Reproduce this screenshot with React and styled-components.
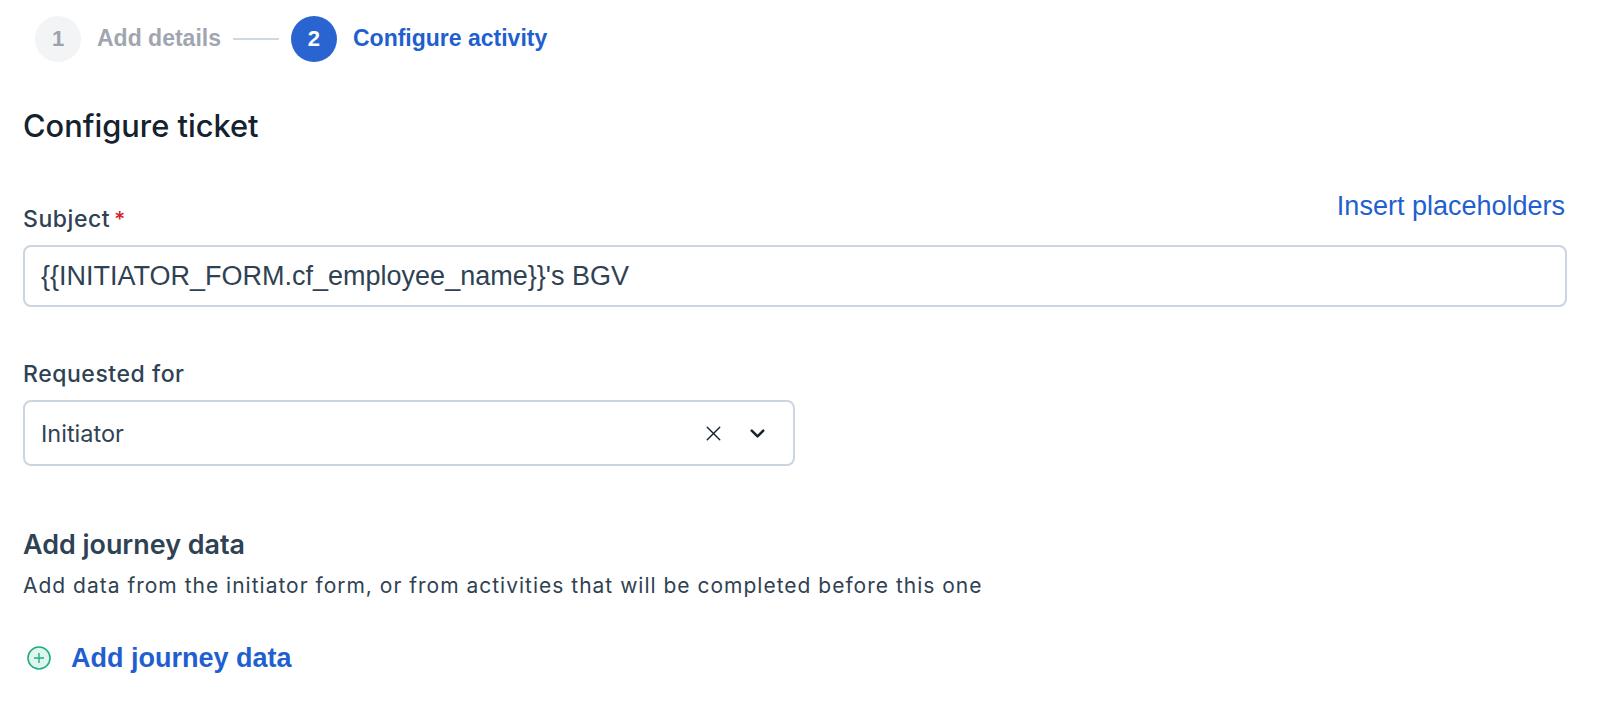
import React from 'react';
import styled, { createGlobalStyle } from 'styled-components';
import { X, ChevronDown } from 'lucide-react';

const GlobalStyle = createGlobalStyle`
  html, body {
    margin: 0;
    padding: 0;
    background: #fff;
    font-family: Inter, "Liberation Sans", sans-serif;
  }
`;

const Page = styled.div`
  width: 1600px;
  height: 701px;
  overflow: hidden;
  box-sizing: border-box;
  padding: 15px 33px 0 23px;
`;

const Stepper = styled.div`
  display: flex;
  align-items: center;
  padding-left: 12px;
  height: 47px;
`;

const StepCircle = styled.div`
  width: 46px;
  height: 46px;
  border-radius: 50%;
  display: flex;
  align-items: center;
  justify-content: center;
  font-family: "Liberation Sans", sans-serif;
  font-weight: 700;
  font-size: 22px;
  background: ${p => (p.$active ? '#2a64d0' : '#f3f4f6')};
  color: ${p => (p.$active ? '#fff' : '#9aa2ad')};
`;

const StepLabel = styled.span`
  margin-left: 16px;
  font-family: "Liberation Sans", sans-serif;
  font-weight: 700;
  font-size: 23px;
  color: ${p => (p.$active ? '#1f5fd0' : '#9fa6b0')};
`;

const StepLine = styled.div`
  width: 46px;
  height: 2px;
  margin: 0 12px;
  background: #cfd8e3;
`;

const Title = styled.h1`
  margin: 45px 0 0;
  font-size: 30.8px;
  line-height: 38px;
  font-weight: 500;
  color: #14212e;
`;

const LabelRow = styled.div`
  display: flex;
  justify-content: space-between;
  align-items: flex-end;
  height: 28px;
`;

const Label = styled.label`
  display: block;
  font-size: 23px;
  letter-spacing: 0.55px;
  line-height: 28px;
  font-weight: 500;
  color: #2f4254;
`;

const Required = styled.span`
  color: #d0202a;
  font-size: 21px;
  line-height: 1;
  margin-left: 4px;
`;

const PlaceholderLink = styled.a`
  font-family: "Liberation Sans", sans-serif;
  font-size: 27px;
  line-height: 30px;
  color: #1f5fd0;
  margin-right: 2px;
  margin-bottom: 12px;
`;

const SubjectField = styled.div`
  margin-top: 12px;
  height: 62px;
  box-sizing: border-box;
  border: 2px solid #cbd5e1;
  border-radius: 8px;
  padding: 0 16px;
  display: flex;
  align-items: center;
  font-family: "Liberation Sans", sans-serif;
  font-size: 27px;
  color: #2f4254;
`;

const SelectField = styled.div`
  margin-top: 12px;
  width: 772px;
  height: 66px;
  box-sizing: border-box;
  border: 2px solid #cbd5e1;
  border-radius: 8px;
  padding: 0 24px 0 16px;
  display: flex;
  align-items: center;
  font-size: 23.5px;
  color: #2f4254;
`;

const SelectValue = styled.span`
  flex: 1;
`;

const SelectIcons = styled.div`
  display: flex;
  align-items: center;
  gap: 20px;
  color: #18222e;
`;

const Section = styled.div`
  margin-top: ${p => p.$top}px;
`;

const SubHeading = styled.h2`
  margin: 0;
  font-size: 26.9px;
  line-height: 32px;
  font-weight: 600;
  color: #2f4254;
`;

const Description = styled.p`
  margin: 13px 0 0;
  font-size: 21px;
  letter-spacing: 1px;
  line-height: 26px;
  color: #2f4254;
`;

const AddLink = styled.a`
  margin-top: 44px;
  display: flex;
  align-items: center;
  gap: 20px;
  padding-left: 4px;
  font-family: "Liberation Sans", sans-serif;
  font-weight: 700;
  font-size: 27px;
  line-height: 30px;
  color: #1f5fd0;
`;

const PlusIcon = () => (
  <svg width="24" height="24" viewBox="0 0 24 24" fill="none">
    <circle cx="12" cy="12" r="11" fill="#e0f5ee" stroke="#1fae85" strokeWidth="1.6" />
    <path d="M12 7v10M7 12h10" stroke="#1fae85" strokeWidth="1.4" />
  </svg>
);

export default function App() {
  return (
    <Page>
      <GlobalStyle />
      <Stepper>
        <StepCircle>1</StepCircle>
        <StepLabel>Add details</StepLabel>
        <StepLine />
        <StepCircle $active>2</StepCircle>
        <StepLabel $active>Configure activity</StepLabel>
      </Stepper>
      <Title>Configure ticket</Title>
      <Section $top={60}>
        <LabelRow>
          <Label>Subject<Required>*</Required></Label>
          <PlaceholderLink>Insert placeholders</PlaceholderLink>
        </LabelRow>
        <SubjectField>{"{{INITIATOR_FORM.cf_employee_name}}'s BGV"}</SubjectField>
      </Section>
      <Section $top={53}>
        <Label>Requested for</Label>
        <SelectField>
          <SelectValue>Initiator</SelectValue>
          <SelectIcons>
            <X size={25} strokeWidth={1.3} />
            <ChevronDown size={23} strokeWidth={2.6} />
          </SelectIcons>
        </SelectField>
      </Section>
      <Section $top={62}>
        <SubHeading>Add journey data</SubHeading>
        <Description>Add data from the initiator form, or from activities that will be completed before this one</Description>
        <AddLink><PlusIcon />Add journey data</AddLink>
      </Section>
    </Page>
  );
}
